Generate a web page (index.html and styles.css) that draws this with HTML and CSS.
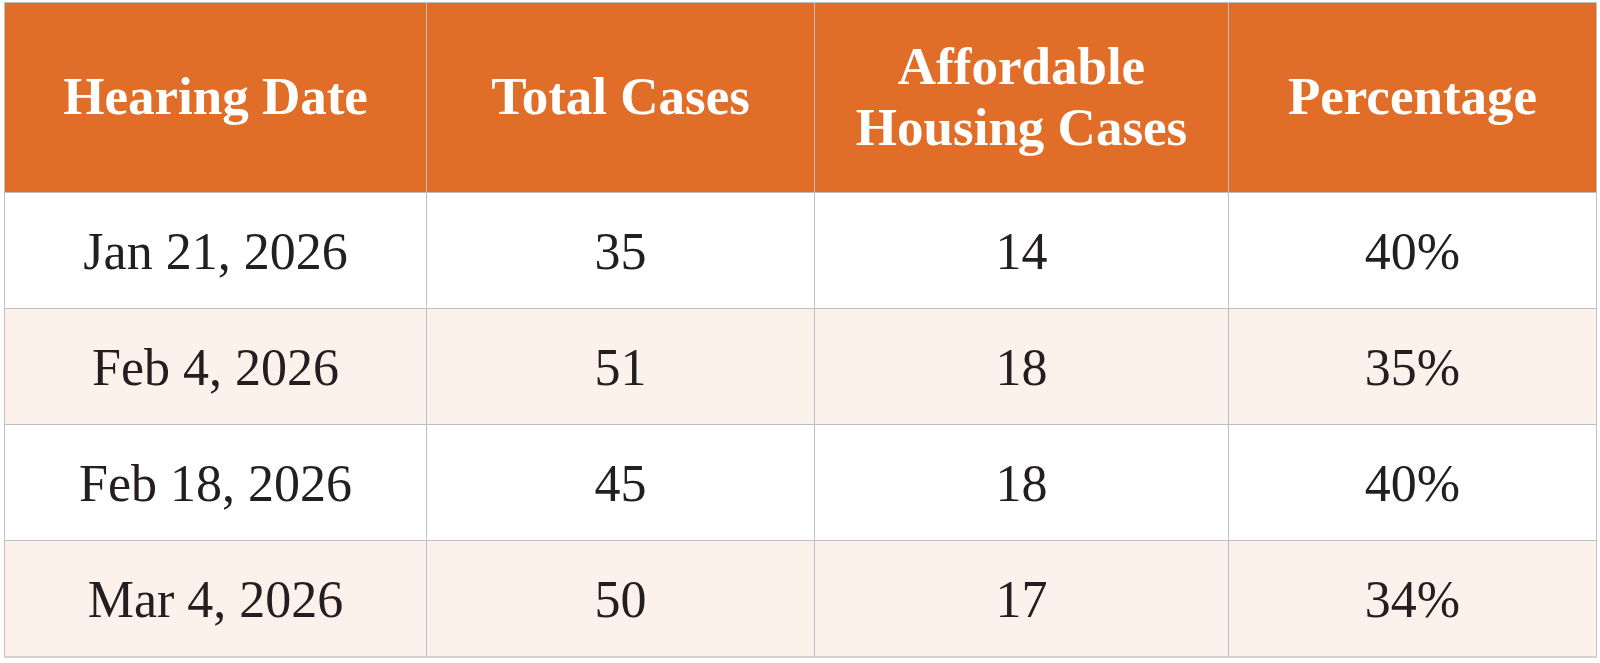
FILE: index.html
```html
<!DOCTYPE html>
<html>
<head>
<meta charset="utf-8">
<link rel="stylesheet" href="styles.css">
</head>
<body>
<div class="wrap">
<table class="data">
<colgroup>
<col class="c1"><col class="c2"><col class="c3"><col class="c4">
</colgroup>
<thead>
<tr>
<th>Hearing Date</th>
<th>Total Cases</th>
<th>Affordable<br>Housing Cases</th>
<th>Percentage</th>
</tr>
</thead>
<tbody>
<tr><td>Jan 21, 2026</td><td>35</td><td>14</td><td>40%</td></tr>
<tr class="alt"><td>Feb 4, 2026</td><td>51</td><td>18</td><td>35%</td></tr>
<tr><td>Feb 18, 2026</td><td>45</td><td>18</td><td>40%</td></tr>
<tr class="alt"><td>Mar 4, 2026</td><td>50</td><td>17</td><td>34%</td></tr>
</tbody>
</table>
</div>
</body>
</html>
```
FILE: styles.css
```css
html, body {
  margin: 0;
  padding: 0;
  background: #ffffff;
}
.wrap {
  padding: 2px 4px;
}
.data {
  width: 1592px;
  border-collapse: collapse;
  table-layout: fixed;
  font-family: "Liberation Serif", "Times New Roman", serif;
  color: #231f20;
}
.c1 { width: 422px; }
.c2 { width: 388px; }
.c3 { width: 414px; }
.c4 { width: 368px; }
.data th, .data td {
  border: 1px solid #bfbfbf;
  text-align: center;
  vertical-align: middle;
  padding: 0;
}
.data th {
  background: #e06e29;
  color: #ffffff;
  font-weight: bold;
  font-size: 53px;
  line-height: 61px;
  height: 187px;
  padding-bottom: 2px;
}
.data td {
  font-size: 52px;
  height: 113px;
  padding-top: 2px;
  background: #ffffff;
}
.data tr.alt td {
  background: #fdf1ec;
}
.data tbody tr:last-child td {
  border-bottom: 2px solid #d6d2cf;
}
```
